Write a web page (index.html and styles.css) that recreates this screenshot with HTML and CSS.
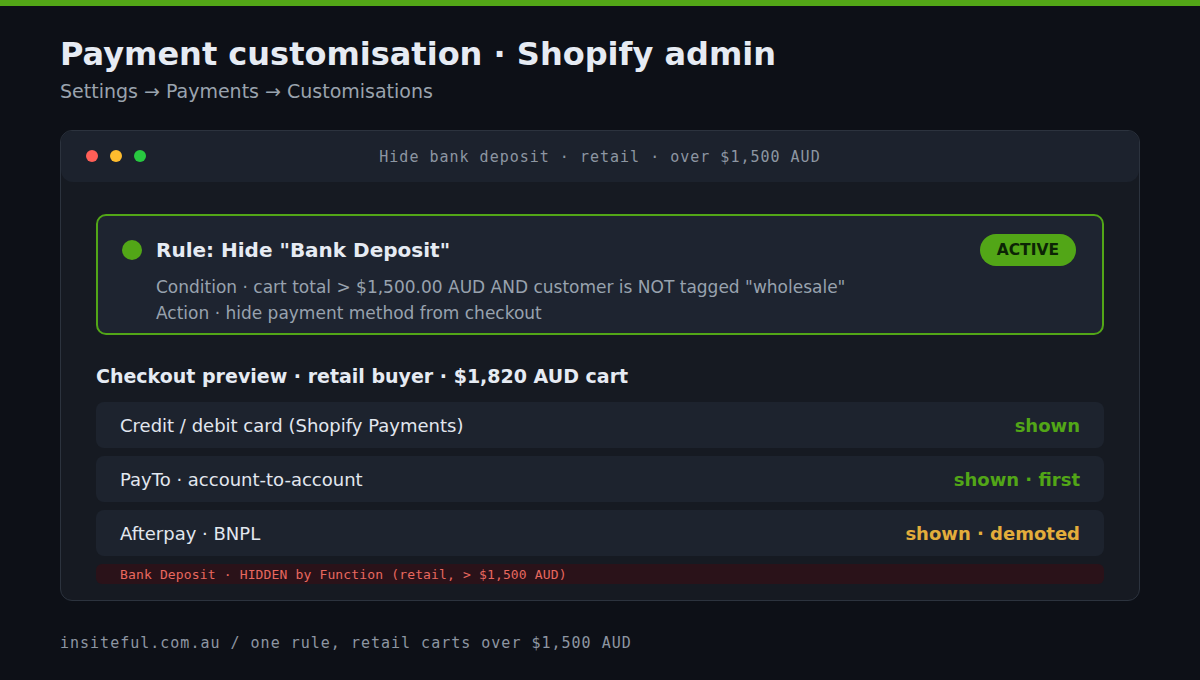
FILE: index.html
```html
<!DOCTYPE html>
<html lang="en">
<head>
<meta charset="utf-8">
<title>Payment customisation · Shopify admin</title>
<link rel="stylesheet" href="styles.css">
</head>
<body>
<div class="topbar"></div>
<main class="page">
  <header class="head">
    <h1 class="title">Payment customisation · Shopify admin</h1>
    <p class="crumbs">Settings → Payments → Customisations</p>
  </header>

  <section class="window">
    <div class="titlebar">
      <div class="dots">
        <span class="dot red"></span>
        <span class="dot yellow"></span>
        <span class="dot green"></span>
      </div>
      <div class="wintitle">Hide bank deposit · retail · over $1,500 AUD</div>
    </div>

    <div class="winbody">
      <div class="rule">
        <div class="rule-head">
          <span class="status-dot"></span>
          <h2 class="rule-title">Rule: Hide "Bank Deposit"</h2>
          <span class="pill">ACTIVE</span>
        </div>
        <p class="rule-line">Condition · cart total &gt; $1,500.00 AUD AND customer is NOT tagged "wholesale"</p>
        <p class="rule-line">Action · hide payment method from checkout</p>
      </div>

      <h3 class="preview-title">Checkout preview · retail buyer · $1,820 AUD cart</h3>

      <ul class="methods">
        <li class="method"><span>Credit / debit card (Shopify Payments)</span><span class="state ok">shown</span></li>
        <li class="method"><span>PayTo · account-to-account</span><span class="state ok">shown · first</span></li>
        <li class="method"><span>Afterpay · BNPL</span><span class="state warn">shown · demoted</span></li>
        <li class="hidden-row">Bank Deposit · HIDDEN by Function (retail, &gt; $1,500 AUD)</li>
      </ul>
    </div>
  </section>

  <footer class="foot">insiteful.com.au / one rule, retail carts over $1,500 AUD</footer>
</main>
</body>
</html>
```

FILE: styles.css
```css
* { box-sizing: border-box; }

html, body {
  margin: 0;
  padding: 0;
}

body {
  background: #0d1017;
  color: #e6ebf3;
  font-family: "DejaVu Sans", "Liberation Sans", sans-serif;
  width: 1200px;
  height: 680px;
  overflow: hidden;
}

.topbar {
  height: 6px;
  background: #52a617;
}

.page {
  padding: 0 60px;
}

.head {
  padding-top: 29px;
}

.title {
  margin: 0;
  font-size: 32px;
  line-height: 38px;
  font-weight: 700;
  color: #e6ebf3;
}

.crumbs {
  margin: 7px 0 0;
  font-size: 19px;
  line-height: 23px;
  color: #9aa3ae;
}

.window {
  margin-top: 27px;
  height: 471px;
  background: #161a22;
  border: 1px solid #2c333e;
  border-radius: 12px;
  overflow: hidden;
}

.titlebar {
  position: relative;
  height: 51px;
  background: #1c222d;
  display: flex;
  align-items: center;
  justify-content: center;
  border-radius: 0 0 12px 12px;
}

.dots {
  position: absolute;
  left: 25px;
  top: 19px;
  display: flex;
  gap: 12px;
}

.dot {
  width: 12px;
  height: 12px;
  border-radius: 50%;
}
.dot.red { background: #ff5f57; }
.dot.yellow { background: #febc2e; }
.dot.green { background: #28c840; }

.wintitle {
  font-family: "DejaVu Sans Mono", "Liberation Mono", monospace;
  font-size: 15px;
  letter-spacing: 1px;
  color: #8d96a2;
}

.winbody {
  padding: 32px 35px 0;
}

.rule {
  background: #1e2430;
  border: 2px solid #52a617;
  border-radius: 10px;
  padding: 18px 26px 7px 24px;
}

.rule-head {
  display: flex;
  align-items: center;
  gap: 14px;
  margin-bottom: 8px;
}

.status-dot {
  width: 20px;
  height: 20px;
  border-radius: 50%;
  background: #52a617;
  flex: none;
}

.rule-title {
  margin: 0;
  flex: 1;
  font-size: 20px;
  line-height: 32px;
  font-weight: 700;
  color: #e6ebf3;
}

.pill {
  background: #52a617;
  color: #0c2405;
  font-size: 15.5px;
  font-weight: 700;
  line-height: 32px;
  padding: 0 17px;
  border-radius: 16px;
}

.rule-line {
  margin: 0 0 0 34px;
  font-size: 17px;
  line-height: 26px;
  color: #98a2ae;
}

.preview-title {
  margin: 28px 0 13px;
  font-size: 19px;
  line-height: 26px;
  font-weight: 700;
  color: #e6ebf3;
}

.methods {
  list-style: none;
  margin: 0;
  padding: 0;
  display: flex;
  flex-direction: column;
  gap: 8px;
}

.method {
  height: 46px;
  background: #1d232e;
  border-radius: 8px;
  padding: 0 24px;
  display: flex;
  align-items: center;
  justify-content: space-between;
  font-size: 18px;
  color: #e2e7ef;
}

.state {
  font-weight: 700;
}
.state.ok { color: #52a617; }
.state.warn { color: #e3ad3b; }

.hidden-row {
  height: 20px;
  background: #2a1219;
  border-radius: 6px;
  padding: 0 24px;
  display: flex;
  align-items: center;
  font-family: "DejaVu Sans Mono", "Liberation Mono", monospace;
  font-size: 13px;
  letter-spacing: 0.15px;
  color: #e8685f;
}

.foot {
  margin-top: 33px;
  font-family: "DejaVu Sans Mono", "Liberation Mono", monospace;
  font-size: 15px;
  letter-spacing: 1px;
  color: #8d96a2;
}
```
